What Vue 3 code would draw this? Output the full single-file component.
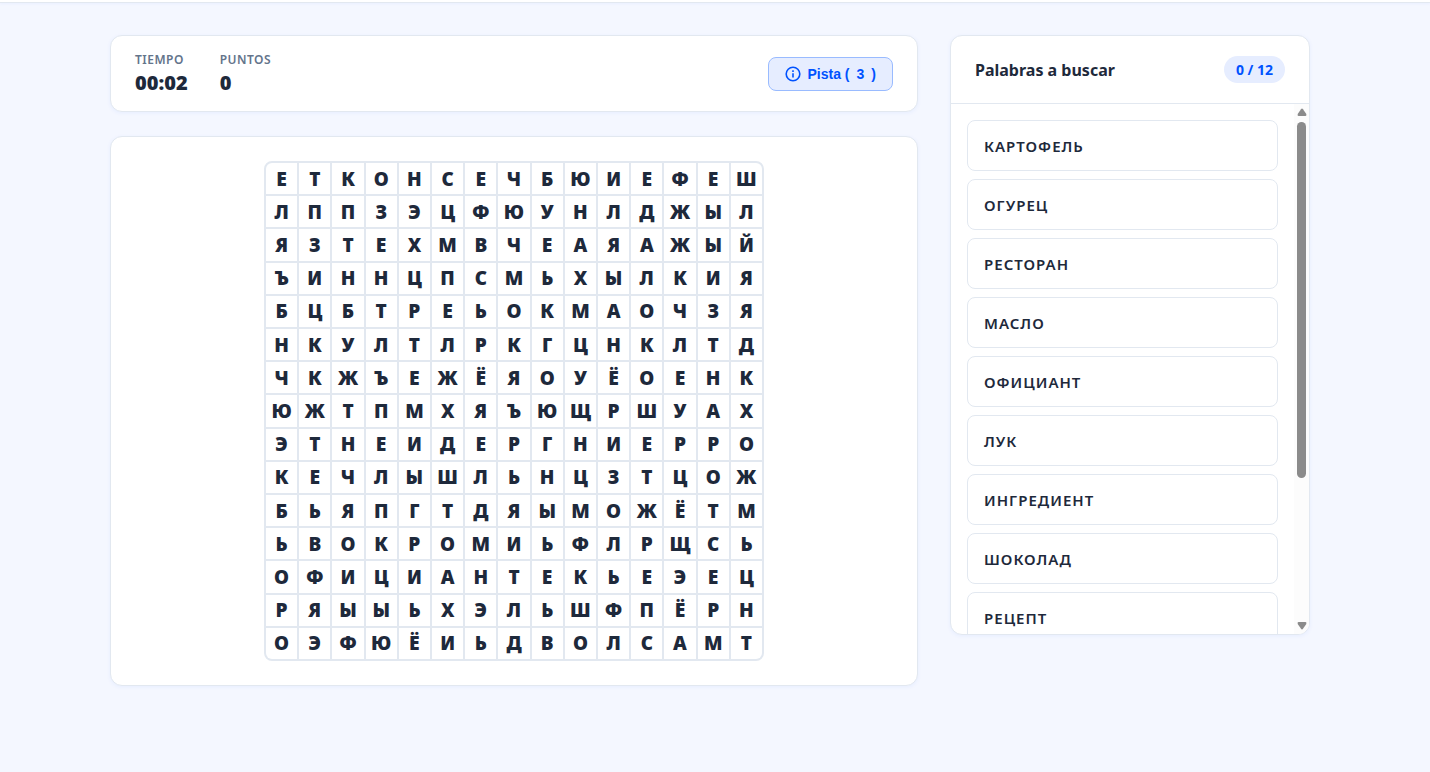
<script setup>
import { computed, ref } from 'vue'

const rows = [
  'ЕТКОНСЕЧБЮИЕФЕШ',
  'ЛППЗЭЦФЮУНЛДЖЫЛ',
  'ЯЗТЕХМВЧЕАЯАЖЫЙ',
  'ЪИННЦПСМЬХЫЛКИЯ',
  'БЦБТРЕЬОКМАОЧЗЯ',
  'НКУЛТЛРКГЦНКЛТД',
  'ЧКЖЪЕЖЁЯОУЁОЕНК',
  'ЮЖТПМХЯЪЮЩРШУАХ',
  'ЭТНЕИДЕРГНИЕРРО',
  'КЕЧЛЫШЛЬНЦЗТЦОЖ',
  'БЬЯПГТДЯЫМОЖЁТМ',
  'ЬВОКРОМИЬФЛРЩСЬ',
  'ОФИЦИАНТЕКЬЕЭЕЦ',
  'РЯЫЫЬХЭЛЬШФПЁРН',
  'ОЭФЮЁИЬДВОЛСАМТ',
]
const cells = rows.flatMap((row) => [...row])

const words = [
  'КАРТОФЕЛЬ', 'ОГУРЕЦ', 'РЕСТОРАН', 'МАСЛО', 'ОФИЦИАНТ',
  'ЛУК', 'ИНГРЕДИЕНТ', 'ШОКОЛАД', 'РЕЦЕПТ',
]
const total = 12

const hints = ref(3)
const found = ref(0)
const list = ref(null)
const scrolled = ref(0)
const thumbTop = computed(() => `${scrolled.value * 100}%`)

function onScroll() {
  scrolled.value = list.value.scrollTop / list.value.scrollHeight
}
function useHint() {
  if (hints.value > 0) hints.value--
}
</script>

<template>
  <div class="page">
    <header class="topbar"></header>
    <main class="layout">
      <section class="game">
        <div class="card stats">
          <div class="stat">
            <span class="label">TIEMPO</span>
            <span class="value">00:02</span>
          </div>
          <div class="stat">
            <span class="label">PUNTOS</span>
            <span class="value">0</span>
          </div>
          <button class="hint" type="button" @click="useHint">
            <svg width="16" height="16" viewBox="0 0 16 16" fill="none" stroke="currentColor" stroke-width="1.6" aria-hidden="true">
              <circle cx="8" cy="8" r="6.8" />
              <path d="M8 11.500V7.200M8 5.900V4.300" />
            </svg>
            <span>Pista (</span><span>{{ hints }}</span><span>)</span>
          </button>
        </div>
        <div class="card board-card">
          <div class="board">
            <div v-for="(letter, i) in cells" :key="i" class="cell">{{ letter }}</div>
          </div>
        </div>
      </section>
      <aside class="card words">
        <div class="words-head">
          <h2>Palabras a buscar</h2>
          <span class="badge">{{ found }} / {{ total }}</span>
        </div>
        <div class="words-body">
          <ul ref="list" class="list" @scroll="onScroll">
            <li v-for="word in words" :key="word">{{ word }}</li>
          </ul>
          <div class="scrollbar" aria-hidden="true">
            <svg class="arrow" width="10" height="8" viewBox="0 0 10 8"><path d="M4 1.200Q5 0 6 1.200L9.300 6Q9.800 8 8.500 8H1.500Q.2 8 .7 6z" /></svg>
            <div class="track"><div class="thumb" :style="{ top: thumbTop }"></div></div>
            <svg class="arrow" width="10" height="8" viewBox="0 0 10 8"><path d="M4 6.800Q5 8 6 6.800L9.300 2Q9.800 0 8.500 0H1.500Q.2 0 .7 2z" /></svg>
          </div>
        </div>
      </aside>
    </main>
  </div>
</template>

<style>
body {
  background: #f4f7ff;
}
</style>

<style scoped>
* {
  box-sizing: border-box;
}
.page {
  min-height: 100vh;
  background: #f4f7ff;
  color: #1e293b;
  font-family: "Noto Sans", "Open Sans", sans-serif;
}
.topbar {
  height: 3px;
  background: #fff;
  border-bottom: 1px solid #e2e8f0;
  box-shadow: 0 1px 3px rgba(0, 82, 255, 0.05);
}
.layout {
  display: grid;
  grid-template-columns: minmax(0, 1fr) 360px;
  gap: 32px;
  align-items: start;
  max-width: 1210px;
  margin: 0 auto;
  padding: 32px 10px 32px 0;
}
.card {
  background: #fff;
  border: 1px solid #e2e8f0;
  border-radius: 12px;
  box-shadow: 0 1px 4px rgba(0, 82, 255, 0.06);
}
.game {
  display: flex;
  flex-direction: column;
  gap: 24px;
}
.stats {
  display: flex;
  align-items: center;
  gap: 32px;
  padding: 16px 24px;
}
.stat {
  display: flex;
  flex-direction: column;
  gap: 2px;
}
.label {
  font-size: 12px;
  line-height: 16px;
  font-weight: 600;
  letter-spacing: 0.5px;
  color: #64748b;
}
.value {
  font-size: 20px;
  line-height: 25px;
  font-weight: 900;
}
.hint {
  display: flex;
  align-items: center;
  gap: 7px;
  margin-left: auto;
  padding: 8px 16px;
  border: 1px solid #99bbff;
  border-radius: 8px;
  background: #e6edff;
  color: #0052ff;
  font-family: "Liberation Sans", Arial, sans-serif;
  font-size: 14px;
  line-height: 16px;
  font-weight: 700;
  cursor: pointer;
}
.board-card {
  padding: 24px;
}
.board {
  display: grid;
  grid-template-columns: repeat(15, 1fr);
  gap: 2px;
  max-width: 500px;
  aspect-ratio: 1;
  margin: 0 auto;
  overflow: hidden;
  background: #e2e8f0;
  border: 2px solid #e2e8f0;
  border-radius: 8px;
}
.cell {
  display: flex;
  align-items: center;
  justify-content: center;
  min-height: 0;
  background: #fff;
  font-size: 19px;
  line-height: 24px;
  font-weight: 900;
}
.words {
  display: flex;
  flex-direction: column;
  max-height: 600px;
  overflow: hidden;
}
.words-head {
  display: flex;
  align-items: center;
  justify-content: space-between;
  padding: 20px 24px;
  border-bottom: 1px solid #e2e8f0;
}
h2 {
  margin: 0;
  font-size: 16px;
  line-height: 24px;
  font-weight: 700;
}
.badge {
  padding: 4px 12px;
  border-radius: 14px;
  background: #e6edff;
  color: #0052ff;
  font-size: 14px;
  line-height: 19px;
  font-weight: 700;
}
.words-body {
  display: flex;
  min-height: 0;
}
.list {
  display: flex;
  flex: 1;
  flex-direction: column;
  gap: 8px;
  margin: 0;
  padding: 16px;
  overflow-y: auto;
  scrollbar-width: none;
  list-style: none;
}
li {
  flex: none;
  padding: 13px 16px 11px;
  border: 1px solid #e2e8f0;
  border-radius: 8px;
  font-size: 15px;
  line-height: 25px;
  font-weight: 600;
  letter-spacing: 1px;
}
.scrollbar {
  display: flex;
  flex-direction: column;
  align-items: center;
  gap: 6px;
  width: 15px;
  padding: 4px 0;
  background: #fcfcfc;
}
.arrow {
  flex: none;
  fill: #8b8b8b;
}
.track {
  position: relative;
  flex: 1;
  width: 9px;
}
.thumb {
  position: absolute;
  width: 100%;
  height: 72%;
  border-radius: 5px;
  background: #8b8b8b;
}
</style>
